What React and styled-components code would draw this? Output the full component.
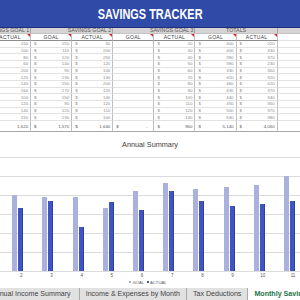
import React from "react";
import styled, { createGlobalStyle } from "styled-components";

const GlobalStyle = createGlobalStyle`
  html, body {
    margin: 0;
    padding: 0;
    background: #fff;
  }
  body {
    font-family: "Liberation Sans", Arial, sans-serif;
    overflow: hidden;
  }
`;

const Page = styled.div`
  width: 300px;
  height: 300px;
  overflow: hidden;
  display: flex;
  flex-direction: column;
  background: #fff;
`;

const TitleBar = styled.div`
  height: 27px;
  flex-shrink: 0;
  background: #2f4ba7;
  border-bottom: 1px solid #1c2f7c;
  display: flex;
  align-items: center;
  justify-content: center;
`;

const TitleText = styled.span`
  display: inline-block;
  color: #fff;
  font-family: "Liberation Sans", Arial, sans-serif;
  font-weight: 700;
  font-size: 14px;
  white-space: nowrap;
  transform: scaleX(0.78);
`;

const Sheet = styled.div`
  display: grid;
  grid-template-columns: repeat(7, 41.1px) 40px;
  margin-left: -10px;
  flex-shrink: 0;
  font-family: "Liberation Sans", Arial, sans-serif;
`;

const GroupHead = styled.div`
  grid-column: span ${(p) => p.$span || 1};
  height: 6px;
  box-sizing: border-box;
  background: #d4d4d4;
  border-right: 1px solid #a6a6a6;
  border-bottom: 1px solid #c4c4c4;
  display: flex;
  align-items: center;
  justify-content: ${(p) => (p.$center ? "center" : "flex-end")};
  padding-right: ${(p) => (p.$center ? 0 : 1)}px;
  font-size: 5.3px;
  line-height: 5px;
  color: #595959;
  white-space: nowrap;
`;

const HeadCell = styled.div`
  position: relative;
  height: 7px;
  box-sizing: border-box;
  border-right: 1px solid #bfbfbf;
  border-bottom: 1px solid #8c8c8c;
  display: flex;
  align-items: center;
  justify-content: center;
  font-size: 5px;
  letter-spacing: 0.3px;
  color: #404040;
  white-space: nowrap;

  &::after {
    content: "";
    position: absolute;
    top: 0;
    right: 0;
    border-top: 3px solid #e0262a;
    border-left: 3px solid transparent;
  }
`;

const DataCell = styled.div`
  height: ${(p) => (p.$total ? 11 : 6.67)}px;
  box-sizing: border-box;
  border-right: 1px solid #bfbfbf;
  border-bottom: 1px solid ${(p) => (p.$total ? "#a6a6a6" : "#e2e2e2")};
  display: flex;
  justify-content: space-between;
  align-items: ${(p) => (p.$total ? "flex-end" : "center")};
  padding: 0 ${(p) => (p.$dash ? 6 : 2)}px ${(p) => (p.$total ? 2 : 0)}px 3px;
  font-size: 4.4px;
  line-height: 5px;
  color: ${(p) => (p.$total ? "#595959" : "#8a8a8a")};
  white-space: nowrap;
`;

const Chart = styled.div`
  flex: 1;
  min-height: 0;
  display: flex;
  flex-direction: column;
  overflow: hidden;
`;

const ChartTitle = styled.div`
  margin-top: 9px;
  height: 8px;
  line-height: 8px;
  text-align: center;
  font-size: 7.3px;
  color: #404040;
`;

const Plot = styled.div`
  margin-top: 8px;
  height: 115px;
  flex-shrink: 0;
  background: repeating-linear-gradient(
    to bottom,
    #dcdcdc 0 1px,
    transparent 1px 19px
  );
`;

const Bars = styled.div`
  display: flex;
  height: 114px;
  margin-left: -24px;
`;

const Group = styled.div`
  flex: 0 0 30.2px;
  box-sizing: border-box;
  display: flex;
  align-items: flex-end;
  gap: 1px;
  padding-left: 6px;
`;

const Bar = styled.div`
  width: 5px;
  background: ${(p) => (p.$goal ? "#aab1df" : "#4054c2")};
  box-shadow: ${(p) => (p.$goal ? "none" : "inset -1px 0 0 #2f3f9e")};
`;

const Ticks = styled.div`
  display: flex;
  margin-left: -24px;
  height: 7px;
  flex-shrink: 0;
`;

const Tick = styled.div`
  flex: 0 0 30.2px;
  text-align: center;
  font-size: 4.5px;
  line-height: 7px;
  color: #595959;
`;

const Legend = styled.div`
  display: flex;
  justify-content: center;
  align-items: center;
  gap: 3px;
  height: 7px;
  margin-left: -4px;
  font-size: 4.2px;
  color: #595959;
`;

const LegendItem = styled.span`
  display: flex;
  align-items: center;
  gap: 1px;

  &::before {
    content: "";
    width: 2px;
    height: 2px;
    background: ${(p) => p.$color};
  }
`;

const Tabs = styled.div`
  height: 12px;
  flex-shrink: 0;
  display: flex;
  background: #e1e1e1;
  margin-left: -15px;
`;

const Tab = styled.div`
  padding: 0 ${(p) => (p.$lead ? 8 : 6)}px 0 6px;
  border-right: 1px solid #ababab;
  font-size: 7.1px;
  line-height: 12px;
  white-space: nowrap;
  color: ${(p) => (p.$active ? "#217346" : "#444")};
  background: ${(p) => (p.$active ? "#fff" : "transparent")};
  font-weight: ${(p) => (p.$active ? 700 : 400)};
`;

const rows = [
  [150, 150, 50, 20, 400, 220],
  [100, 110, 200, 30, 400, 330],
  [80, 120, 250, 40, 390, 370],
  [60, 140, 120, 50, 390, 230],
  [200, 90, 100, 60, 330, 360],
  [120, 130, 130, 70, 420, 320],
  [140, 150, 200, 80, 460, 420],
  [160, 170, 120, 90, 430, 370],
  [100, 150, 140, 100, 440, 340],
  [120, 90, 120, 110, 450, 350],
  [140, 120, 110, 120, 500, 370],
  [150, 130, 100, 130, 530, 380],
];

const headers = ["ACTUAL", "GOAL", "ACTUAL", "GOAL", "ACTUAL", "GOAL", "ACTUAL"];

function Row({ values, total }) {
  const [a1, g2, a2, a3, gt, at] = values;
  return (
    <>
      <DataCell $total={total}>
        <span />
        <span>{a1}</span>
      </DataCell>
      <DataCell $total={total}>
        <span>$</span>
        <span>{g2}</span>
      </DataCell>
      <DataCell $total={total}>
        <span>$</span>
        <span>{a2}</span>
      </DataCell>
      {total ? (
        <DataCell $total $dash>
          <span>$</span>
          <span>-</span>
        </DataCell>
      ) : (
        <DataCell />
      )}
      <DataCell $total={total}>
        <span>$</span>
        <span>{a3}</span>
      </DataCell>
      <DataCell $total={total}>
        <span>$</span>
        <span>{gt}</span>
      </DataCell>
      <DataCell $total={total}>
        <span>$</span>
        <span>{at}</span>
      </DataCell>
      <DataCell $total={total} />
    </>
  );
}

export default function App() {
  return (
    <Page>
      <GlobalStyle />
      <TitleBar>
        <TitleText>SAVINGS TRACKER</TitleText>
      </TitleBar>

      <Sheet>
        <GroupHead>SAVINGS GOAL 1</GroupHead>
        <GroupHead $span={2}>SAVINGS GOAL 2</GroupHead>
        <GroupHead $span={2}>SAVINGS GOAL 3</GroupHead>
        <GroupHead $span={2} $center>
          TOTALS
        </GroupHead>
        <GroupHead />

        {headers.map((h, i) => (
          <HeadCell key={i}>{h}</HeadCell>
        ))}
        <DataCell style={{ height: 7 }} />

        {rows.map((r, i) => (
          <Row key={i} values={r} />
        ))}
        <Row total values={["1,620", "1,570", "1,640", "900", "5,140", "4,060"]} />
      </Sheet>

      <Chart>
        <ChartTitle>Annual Summary</ChartTitle>
        <Plot>
          <Bars>
            {rows.map((r, i) => (
              <Group key={i}>
                <Bar $goal style={{ height: r[4] * 0.19 }} />
                <Bar style={{ height: r[5] * 0.19 }} />
              </Group>
            ))}
          </Bars>
        </Plot>
        <Ticks>
          {rows.map((_, i) => (
            <Tick key={i}>{i + 1}</Tick>
          ))}
        </Ticks>
        <Legend>
          <LegendItem $color="#aab1df">GOAL</LegendItem>
          <LegendItem $color="#4054c2">ACTUAL</LegendItem>
        </Legend>
      </Chart>

      <Tabs>
        <Tab $lead>Annual Income Summary</Tab>
        <Tab>Income &amp; Expenses by Month</Tab>
        <Tab>Tax Deductions</Tab>
        <Tab $active>Monthly Savings</Tab>
      </Tabs>
    </Page>
  );
}
